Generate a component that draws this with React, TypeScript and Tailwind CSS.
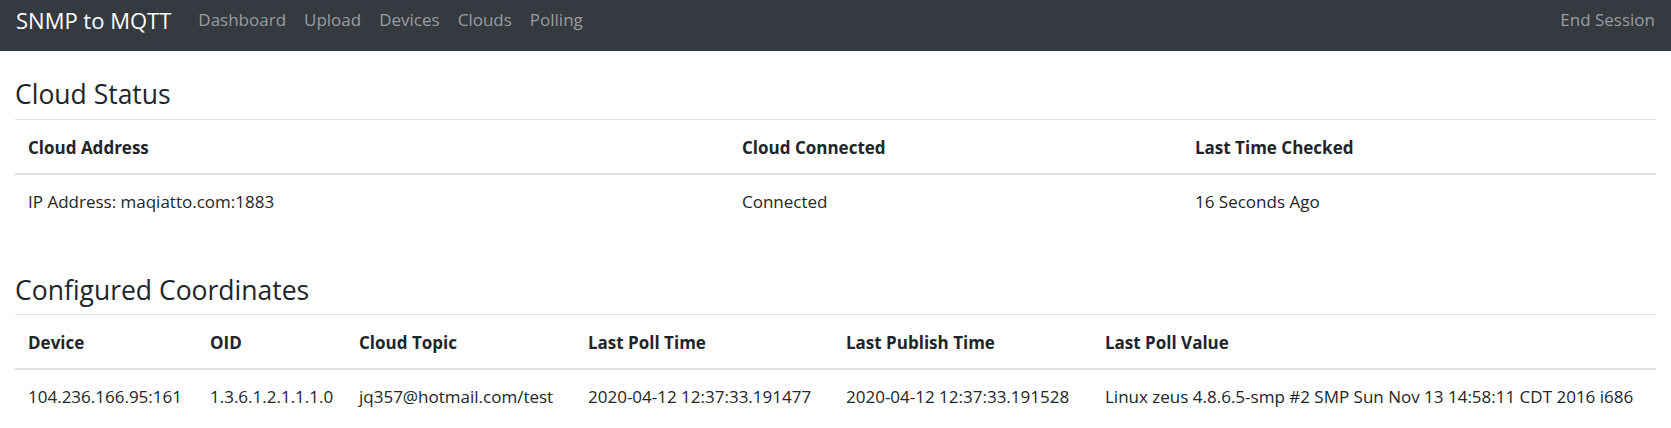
import React from "react";

const navLinks = ["Dashboard", "Upload", "Devices", "Clouds", "Polling"];

const cloudCols = [
  { label: "Cloud Address", w: "w-[714px]" },
  { label: "Cloud Connected", w: "w-[453px]" },
  { label: "Last Time Checked", w: "w-[474px]" },
];

const coordCols = [
  { label: "Device", w: "w-[182px]" },
  { label: "OID", w: "w-[149px]" },
  { label: "Cloud Topic", w: "w-[229px]" },
  { label: "Last Poll Time", w: "w-[258px]" },
  { label: "Last Publish Time", w: "w-[259px]" },
  { label: "Last Poll Value", w: "w-[564px]" },
];

const coordRow = [
  "104.236.166.95:161",
  "1.3.6.1.2.1.1.1.0",
  "jq357@hotmail.com/test",
  "2020-04-12 12:37:33.191477",
  "2020-04-12 12:37:33.191528",
  "Linux zeus 4.8.6.5-smp #2 SMP Sun Nov 13 14:58:11 CDT 2016 i686",
];

function DataTable({ cols, row }: { cols: { label: string; w: string }[]; row: string[] }) {
  return (
    <table className="w-full table-fixed border-collapse mb-[19px]">
      <thead>
        <tr>
          {cols.map((c) => (
            <th
              key={c.label}
              className={`${c.w} text-left font-bold px-[13px] pt-[15px] pb-[12px] leading-[26px] border-t border-b-2 border-[#dee2e6] whitespace-nowrap`}
            >
              {c.label}
            </th>
          ))}
        </tr>
      </thead>
      <tbody>
        <tr>
          {row.map((v, i) => (
            <td key={i} className="px-[13px] pt-[14px] pb-[12px] leading-[26px] whitespace-nowrap">
              {v}
            </td>
          ))}
        </tr>
      </tbody>
    </table>
  );
}

export default function App() {
  return (
    <div className="min-h-screen bg-white text-[#212529] font-['Open_Sans',sans-serif] text-[17px]">
      {/* Top bar */}
      <nav className="h-[51px] bg-[#343a40] flex items-start justify-between px-[16px]">
        <div className="flex items-start">
          <a className="mt-[5px] text-white text-[22px] leading-[30px] mr-[27px]">SNMP to MQTT</a>
          <ul className="mt-[7px] flex gap-[18px] leading-[26px] text-[#9a9da0]">
            {navLinks.map((l) => (
              <li key={l}>{l}</li>
            ))}
          </ul>
        </div>
        <a className="mt-[7px] leading-[26px] text-[#9a9da0]">End Session</a>
      </nav>

      <main className="px-[15px]">
        <section className="pt-[25px]">
          <h3 className="text-[26.5px] leading-[37px] font-normal mb-[6px]">Cloud Status</h3>
          <DataTable cols={cloudCols} row={["IP Address: maqiatto.com:1883", "Connected", "16 Seconds Ago"]} />
        </section>
        <section className="pt-[26px]">
          <h3 className="text-[26.5px] leading-[37px] font-normal mb-[5px]">Configured Coordinates</h3>
          <DataTable cols={coordCols} row={coordRow} />
        </section>
      </main>
    </div>
  );
}
